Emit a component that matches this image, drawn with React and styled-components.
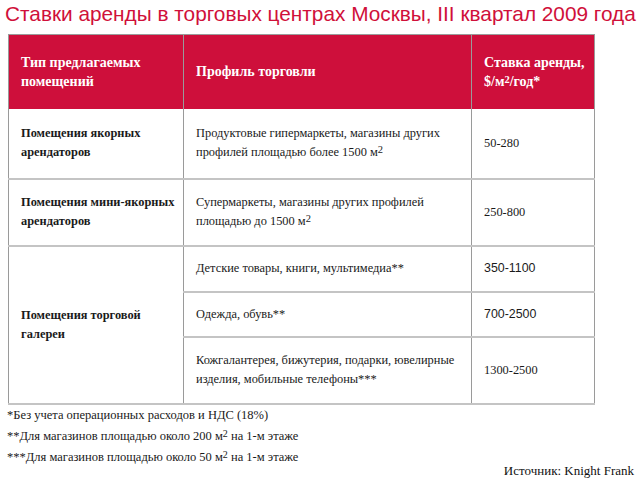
import React from "react";
import styled, { createGlobalStyle } from "styled-components";

const Global = createGlobalStyle`
  html, body { margin: 0; padding: 0; background: #fff; }
  body { width: 640px; height: 480px; overflow: hidden; }
`;

const Page = styled.div`
  width: 640px;
  height: 480px;
  display: flex;
  flex-direction: column;
  font-family: "Liberation Serif", "Times New Roman", serif;
  color: #1a1a1a;
`;

const Title = styled.h1`
  margin: 0;
  padding: 2px 0 0 5px;
  height: 30px;
  box-sizing: border-box;
  font-family: "Liberation Sans", Arial, sans-serif;
  font-weight: normal;
  font-size: 20.8px;
  line-height: 24px;
  color: #d0103a;
  white-space: nowrap;
`;

const Table = styled.table`
  margin: 4px 0 0 8px;
  width: 586px;
  border-collapse: collapse;
  table-layout: fixed;
`;

const HeadCell = styled.th`
  background: #ce0f3b;
  color: #fff;
  font-weight: bold;
  font-size: 14px;
  line-height: 19px;
  text-align: left;
  vertical-align: middle;
  padding: 0 4px 0 12px;
  height: 74px;
  border-left: 1px solid #9a9a9a;
  border-right: 1px solid #9a9a9a;
  border-top: 1px solid #9a9a9a;
  box-sizing: border-box;
  sup { font-size: 10.5px; vertical-align: 3px; line-height: 0; }
`;

const Cell = styled.td`
  font-size: 12.4px;
  line-height: 19px;
  font-weight: ${(p) => (p.$bold ? "bold" : "normal")};
  font-family: ${(p) =>
    p.$sans ? '"Liberation Sans", Arial, sans-serif' : '"Liberation Serif", "Times New Roman", serif'};
  vertical-align: middle;
  padding: 0 4px 0 12px;
  height: ${(p) => p.$h}px;
  border-left: 1px solid #9a9a9a;
  border-right: 1px solid #9a9a9a;
  border-bottom: 2px solid #c4c4c4;
  box-sizing: border-box;
  sup { font-size: 10.5px; vertical-align: 3px; line-height: 0; }
`;

const Notes = styled.div`
  display: flex;
  flex-direction: column;
  padding: 0 0 0 7px;
  font-size: 12.5px;
  line-height: 21px;
  sup { font-size: 10px; vertical-align: 3px; line-height: 0; }
`;

const Source = styled.div`
  align-self: flex-end;
  margin: -6px 6px 0 0;
  font-size: 13px;
  line-height: 18px;
  color: #111;
`;

const M2 = () => (
  <>
    м<sup>2</sup>
  </>
);

export default function App() {
  return (
    <Page>
      <Global />
      <Title>Ставки аренды в торговых центрах Москвы, III квартал 2009 года</Title>
      <Table>
        <colgroup>
          <col style={{ width: 175 }} />
          <col style={{ width: 288 }} />
          <col style={{ width: 123 }} />
        </colgroup>
        <thead>
          <tr>
            <HeadCell>Тип предлагаемых помещений</HeadCell>
            <HeadCell>Профиль торговли</HeadCell>
            <HeadCell>
              Ставка аренды,
              <br />
              $/<M2 />/год*
            </HeadCell>
          </tr>
        </thead>
        <tbody>
          <tr>
            <Cell $bold $h={70}>Помещения якорных арендаторов</Cell>
            <Cell $h={70}>
              Продуктовые гипермаркеты, магазины других профилей площадью более 1500 <M2 />
            </Cell>
            <Cell $h={70}>50-280</Cell>
          </tr>
          <tr>
            <Cell $bold $h={67}>Помещения мини-якорных арендаторов</Cell>
            <Cell $h={67}>
              Супермаркеты, магазины других профилей площадью до 1500 <M2 />
            </Cell>
            <Cell $h={67}>250-800</Cell>
          </tr>
          <tr>
            <Cell $bold rowSpan={3} $h={158}>
              Помещения торговой галереи
            </Cell>
            <Cell $h={46}>Детские товары, книги, мультимедиа**</Cell>
            <Cell $sans $h={46}>350-1100</Cell>
          </tr>
          <tr>
            <Cell $h={45}>Одежда, обувь**</Cell>
            <Cell $sans $h={45}>700-2500</Cell>
          </tr>
          <tr>
            <Cell $h={67}>
              Кожгалантерея, бижутерия, подарки, ювелирные изделия, мобильные телефоны***
            </Cell>
            <Cell $h={67}>1300-2500</Cell>
          </tr>
        </tbody>
      </Table>
      <Notes>
        <span>*Без учета операционных расходов и НДС (18%)</span>
        <span>
          **Для магазинов площадью около 200 <M2 /> на 1-м этаже
        </span>
        <span>
          ***Для магазинов площадью около 50 <M2 /> на 1-м этаже
        </span>
      </Notes>
      <Source>Источник: Knight Frank</Source>
    </Page>
  );
}
